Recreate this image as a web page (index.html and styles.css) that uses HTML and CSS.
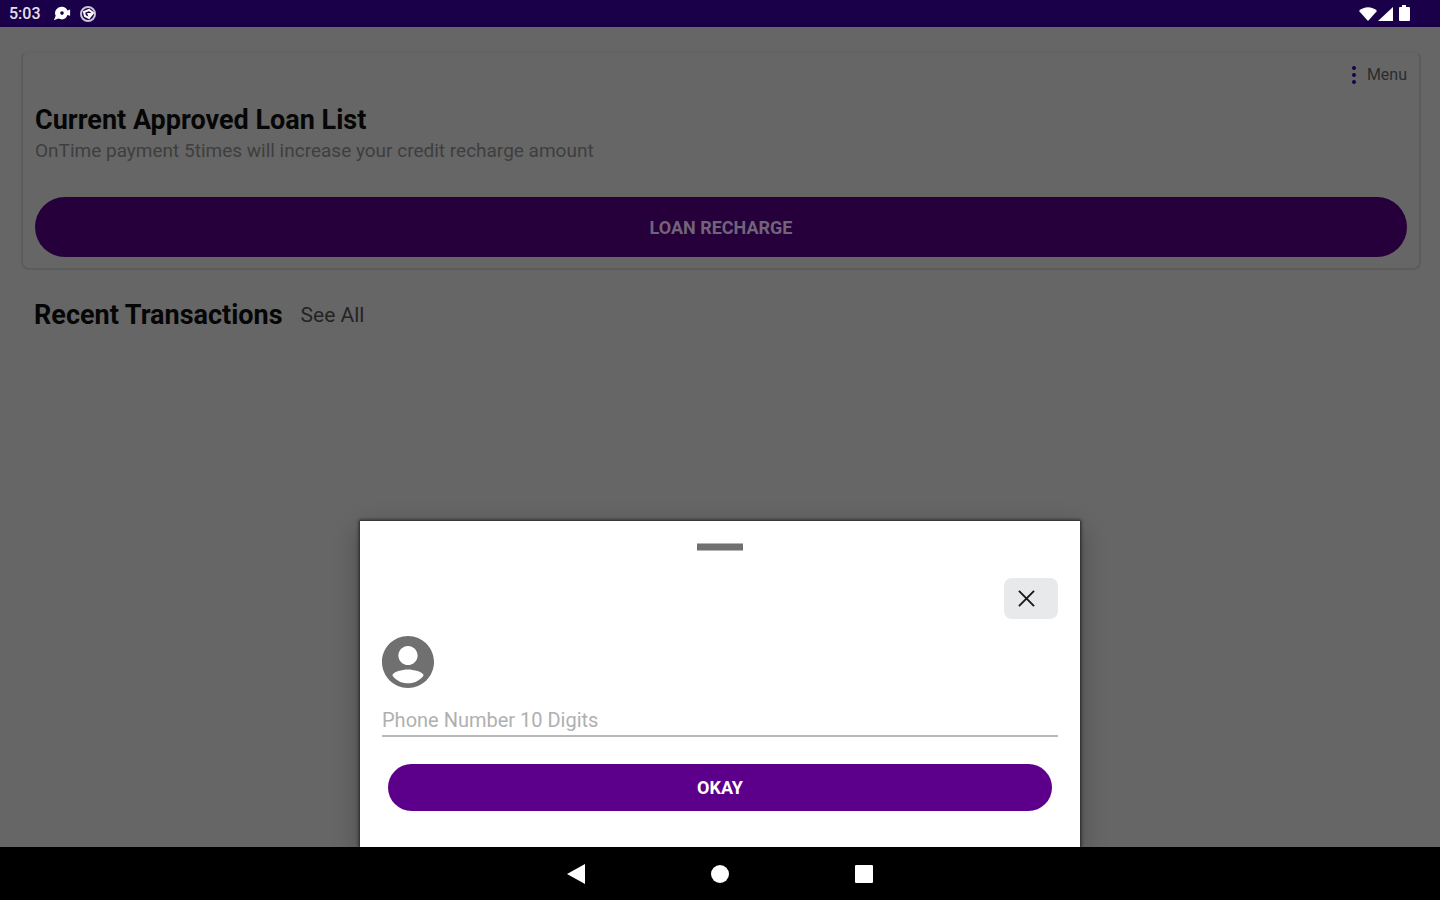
FILE: index.html
```html
<!DOCTYPE html>
<html lang="en">
<head>
<meta charset="utf-8">
<meta name="viewport" content="width=device-width, initial-scale=1">
<title>Loan Recharge</title>
<link rel="stylesheet" href="styles.css">
</head>
<body>
<header class="status-bar">
  <div class="status-group">
    <span class="clock">5:03</span>
    <svg class="status-icon notice" viewBox="0 0 20 16" aria-hidden="true"><path fill="#fff" fill-rule="evenodd" d="M10 0a7 7 0 0 1 6 4l3-1v7l-3-1a7 7 0 0 1-6 5l-4-1-5 2 2-5A7 7 0 0 1 10 0zm0 5a2 2 0 1 0 0 4 2 2 0 0 0 0-4z"/></svg>
    <svg class="status-icon" viewBox="0 0 18 18" aria-hidden="true"><circle cx="9" cy="9" r="7" fill="none" stroke="#c9c3d6" stroke-width="2"/><path fill="none" stroke="#fff" stroke-width="2" d="M5 7l5-2 4 3-4 5-4-2z"/><path fill="#fff" d="M8 8h5l-3 5z"/></svg>
  </div>
  <div class="status-group signals">
    <svg class="status-icon" viewBox="0 0 18 18" aria-hidden="true"><path fill="#fff" d="M0 6c5-5 13-5 18 0l-9 10z"/></svg>
    <svg class="status-icon" viewBox="0 0 18 18" aria-hidden="true"><path fill="#fff" d="M16 2v14H1z"/></svg>
    <svg class="status-icon" viewBox="0 0 18 18" aria-hidden="true"><path fill="#fff" d="M7 0h4v2h3q1 0 1 1v12q0 1-1 1H5q-1 0-1-1V3q0-1 1-1h2z"/></svg>
  </div>
</header>

<main class="screen">
  <section class="loan-card">
    <button class="menu-button" type="button">
      <svg class="menu-dots" viewBox="0 0 6 20" aria-hidden="true"><g fill="#1a0048"><circle cx="3" cy="3" r="2"/><circle cx="3" cy="10" r="2"/><circle cx="3" cy="17" r="2"/></g></svg>
      Menu
    </button>
    <h1 class="heading">Current Approved Loan List</h1>
    <p class="subtitle">OnTime payment 5times will increase your credit recharge amount</p>
    <button class="pill recharge" type="button">LOAN RECHARGE</button>
  </section>
  <section class="transactions">
    <h2 class="heading">Recent Transactions</h2>
    <a class="see-all" href="#">See All</a>
  </section>

  <form class="sheet" role="dialog" aria-label="Phone number">
    <span class="handle"></span>
    <button class="close" type="button" aria-label="Close">
      <svg class="close-icon" viewBox="0 0 18 18" aria-hidden="true"><path d="M1 1l16 16M17 1L1 17" stroke="#18191b" stroke-width="2" fill="none"/></svg>
    </button>
    <svg class="avatar" viewBox="2 2 20 20" aria-hidden="true"><path fill="#707070" d="M12 2C6.480 2 2 6.480 2 12s4.480 10 10 10 10-4.480 10-10S17.520 2 12 2zm0 3.800c2.040 0 3.700 1.660 3.700 3.700s-1.660 3.700-3.700 3.700-3.700-1.660-3.700-3.700S9.960 5.800 12 5.800zm0 14.400c-2.500 0-4.710-1.180-6-3.020C6.030 15.790 10 14.900 12 14.900s5.970.89 6 2.280c-1.290 1.840-3.500 3.020-6 3.020z"/></svg>
    <input class="phone" type="tel" placeholder="Phone Number 10 Digits" aria-label="Phone number, 10 digits">
    <button class="pill okay" type="button">OKAY</button>
  </form>
</main>

<nav class="nav-bar">
  <button class="nav-button" type="button" aria-label="Back"><svg class="nav-icon" viewBox="0 0 20 20" aria-hidden="true"><path fill="#fff" d="M19 0v20L1 10z"/></svg></button>
  <button class="nav-button" type="button" aria-label="Home"><svg class="nav-icon" viewBox="0 0 20 20" aria-hidden="true"><circle cx="10" cy="10" r="9" fill="#fff"/></svg></button>
  <button class="nav-button" type="button" aria-label="Recents"><svg class="nav-icon" viewBox="0 0 20 20" aria-hidden="true"><rect x="1" y="1" width="18" height="18" rx="1" fill="#fff"/></svg></button>
</nav>
</body>
</html>
```

FILE: styles.css
```css
* {
  box-sizing: border-box;
}

body {
  display: flex;
  flex-direction: column;
  min-height: 100vh;
  margin: 0;
  background: #666;
  color: #060606;
  font-family: Roboto, "Liberation Sans", sans-serif;
}

button {
  padding: 0;
  border: 0;
  background: none;
  color: inherit;
  font: inherit;
}

.status-bar {
  display: flex;
  align-items: center;
  justify-content: space-between;
  height: 27px;
  padding: 0 27px 0 9px;
  background: #1a0048;
  color: #e4e0ea;
}

.status-group {
  display: flex;
  align-items: center;
  gap: 8px;
}

.signals {
  gap: 0;
}

.clock {
  margin-right: 4px;
  font-size: 16px;
  font-weight: 500;
}

.status-icon {
  width: 18px;
  height: 18px;
}

.screen {
  position: relative;
  flex: 1;
  padding: 24px 19px 0 21px;
  overflow: hidden;
}

.loan-card {
  display: flex;
  flex-direction: column;
  padding: 12px 12px 11px;
  border: 2px solid #5c5c5c;
  border-top-color: #636363;
  border-radius: 8px;
}

.menu-button {
  display: flex;
  align-items: center;
  align-self: flex-end;
  gap: 10px;
  color: #2c2c2c;
  font-size: 16px;
  line-height: 20px;
}

.menu-dots {
  width: 6px;
  height: 20px;
}

.heading {
  margin: 0;
  font-size: 27px;
  font-weight: 700;
  line-height: 32px;
}

.loan-card .heading {
  margin-top: 19px;
}

.subtitle {
  margin: 0;
  color: #3e3e3e;
  font-size: 19px;
  line-height: 30px;
}

.pill {
  border-radius: 32px;
  font-size: 18px;
  font-weight: 700;
  text-align: center;
}

.recharge {
  height: 60px;
  margin-top: 31px;
  background: #26003a;
  color: #716479;
}

.transactions {
  display: flex;
  align-items: center;
  gap: 18px;
  padding: 29px 13px;
}

.see-all {
  color: #242424;
  font-size: 21px;
  line-height: 32px;
  text-decoration: none;
}

.sheet {
  position: absolute;
  bottom: 0;
  left: 25%;
  display: flex;
  flex-direction: column;
  width: 50%;
  padding: 22px 22px 36px;
  background: #fff;
  box-shadow: 0 0 3px 1px #222, 0 8px 24px rgba(0, 0, 0, 0.3);
}

.handle {
  align-self: center;
  width: 46px;
  height: 8px;
  background: #707070;
  border: solid #b4b4b4;
  border-width: 1px 0;
}

.close {
  display: flex;
  align-items: center;
  align-self: flex-end;
  width: 54px;
  height: 41px;
  margin-top: 27px;
  padding-left: 14px;
  border-radius: 8px;
  background: #e8e9eb;
}

.close-icon {
  width: 17px;
  height: 17px;
}

.avatar {
  width: 52px;
  height: 52px;
  margin-top: 17px;
}

.phone {
  height: 49px;
  padding: 17px 0 0;
  border: 0;
  border-bottom: 2px solid #b9b9b9;
  border-radius: 0;
  outline: 0;
  background: none;
  color: #222;
  font-family: inherit;
  font-size: 20px;
}

.phone::placeholder {
  color: #b0b0b0;
}

.okay {
  height: 47px;
  margin: 27px 6px 0;
  background: #5c008c;
  color: #fff;
}

.nav-bar {
  display: flex;
  align-items: center;
  justify-content: center;
  gap: 124px;
  height: 53px;
  background: #000;
}

.nav-button {
  width: 20px;
  height: 20px;
}

.nav-icon {
  display: block;
  width: 20px;
  height: 20px;
}
```
